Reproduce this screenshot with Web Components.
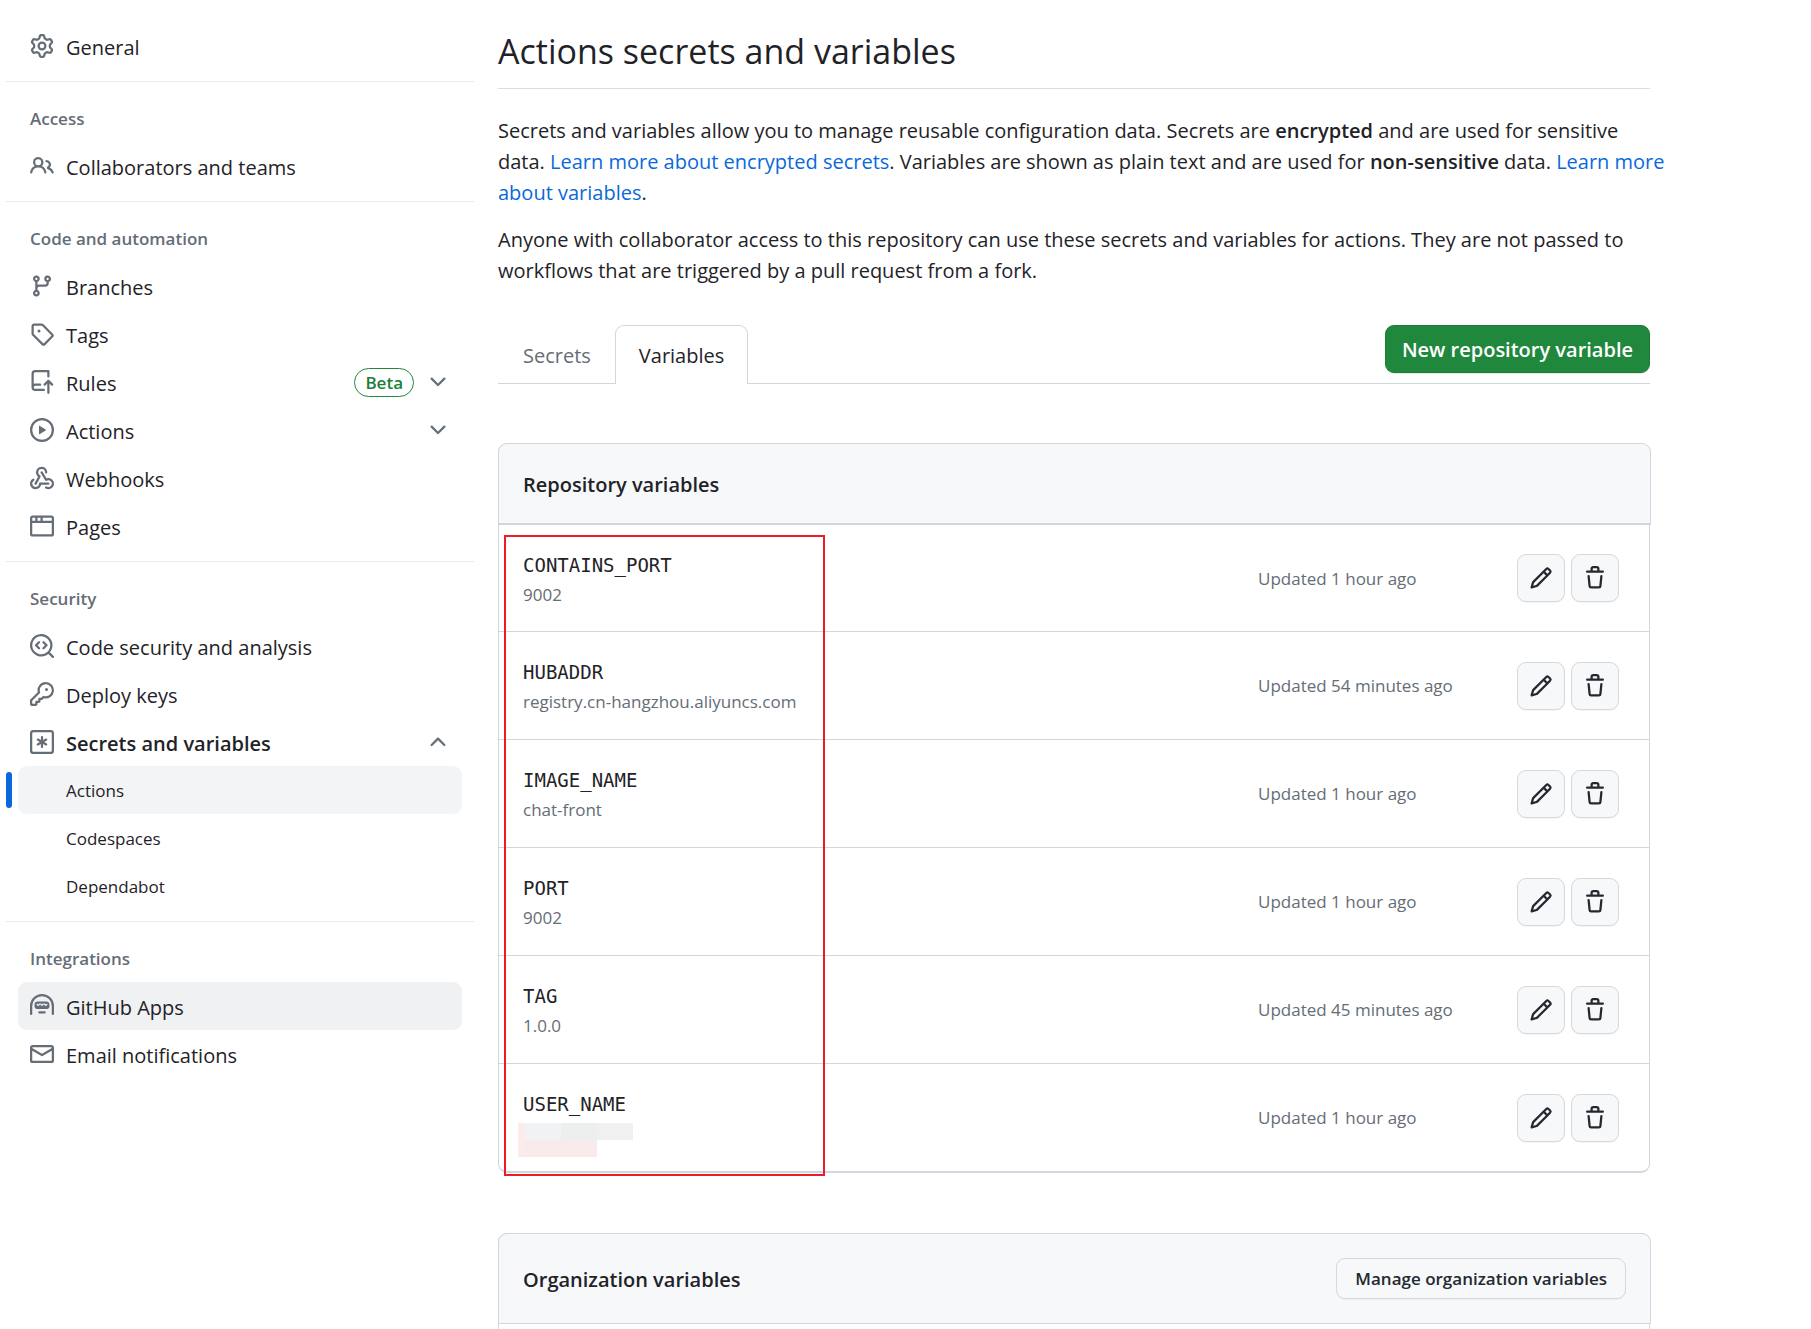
<!DOCTYPE html>
<html lang="en">
<head>
<meta charset="utf-8">
<title>Actions secrets and variables</title>
<style>
  :root {
    --fg: #1f2328;
    --muted: #656d76;
    --accent: #0969da;
    --line: #d0d7de;
    --subtle: #f6f8fa;
    --body: 20px;
    --small: 17px;
  }
  body {
    margin: 0;
    background: #fff;
    color: var(--fg);
    font-family: "Open Sans", "Noto Sans", sans-serif;
    font-size: var(--body);
    line-height: 31px;
  }
</style>
</head>
<body>
<settings-page>
  <settings-nav slot="nav">
    <nav-section>
      <nav-item icon="gear">General</nav-item>
    </nav-section>
    <nav-section heading="Access">
      <nav-item icon="people">Collaborators and teams</nav-item>
    </nav-section>
    <nav-section heading="Code and automation">
      <nav-item icon="branch">Branches</nav-item>
      <nav-item icon="tag">Tags</nav-item>
      <nav-item icon="push" expand="down" badge="Beta">Rules</nav-item>
      <nav-item icon="play" expand="down">Actions</nav-item>
      <nav-item icon="webhook">Webhooks</nav-item>
      <nav-item icon="browser">Pages</nav-item>
    </nav-section>
    <nav-section heading="Security">
      <nav-item icon="codescan">Code security and analysis</nav-item>
      <nav-item icon="key">Deploy keys</nav-item>
      <nav-item icon="asterisk" expand="up">Secrets and variables</nav-item>
      <nav-item sub current>Actions</nav-item>
      <nav-item sub>Codespaces</nav-item>
      <nav-item sub>Dependabot</nav-item>
    </nav-section>
    <nav-section heading="Integrations">
      <nav-item icon="hubot" active>GitHub Apps</nav-item>
      <nav-item icon="mail">Email notifications</nav-item>
    </nav-section>
  </settings-nav>

  <page-intro>
    <span slot="title">Actions secrets and variables</span>
  </page-intro>
  <tab-bar></tab-bar>
  <variable-box heading="Repository variables">
    <variable-table></variable-table>
    <highlight-frame slot="overlay"></highlight-frame>
  </variable-box>
  <variable-box heading="Organization variables" open-ended>
    <action-button slot="action">Manage organization variables</action-button>
  </variable-box>
</settings-page>

<script>
const ICONS = {
  gear: 'M8 0a8.2 8.2 0 0 1 .701.031C9.444.095 9.99.645 10.16 1.29l.288 1.107c.018.066.079.158.212.224.231.114.454.243.668.386.123.082.233.09.299.071l1.103-.303c.644-.176 1.392.021 1.82.63.27.385.506.792.704 1.218.315.675.111 1.422-.364 1.891l-.814.806c-.049.048-.098.147-.088.294.016.257.016.515 0 .772-.01.147.038.246.088.294l.814.806c.475.469.679 1.216.364 1.891a7.977 7.977 0 0 1-.704 1.217c-.428.61-1.176.807-1.82.63l-1.102-.302c-.067-.019-.177-.011-.3.071a5.909 5.909 0 0 1-.668.386c-.133.066-.194.158-.211.224l-.29 1.106c-.168.646-.715 1.196-1.458 1.26a8.006 8.006 0 0 1-1.402 0c-.743-.064-1.289-.614-1.458-1.26l-.289-1.106c-.018-.066-.079-.158-.212-.224a5.738 5.738 0 0 1-.668-.386c-.123-.082-.233-.09-.299-.071l-1.103.303c-.644.176-1.392-.021-1.82-.63a8.12 8.12 0 0 1-.704-1.218c-.315-.675-.111-1.422.363-1.891l.815-.806c.05-.048.098-.147.088-.294a6.214 6.214 0 0 1 0-.772c.01-.147-.038-.246-.088-.294l-.815-.806C.635 6.045.431 5.298.746 4.623a7.92 7.92 0 0 1 .704-1.217c.428-.61 1.176-.807 1.82-.63l1.102.302c.067.019.177.011.3-.071.214-.143.437-.272.668-.386.133-.066.194-.158.211-.224l.29-1.106C6.009.645 6.556.095 7.299.03 7.53.01 7.764 0 8 0Zm-.571 1.525c-.036.003-.108.036-.137.146l-.289 1.105c-.147.561-.549.967-.998 1.189-.173.086-.34.183-.5.29-.417.278-.97.423-1.529.27l-1.103-.303c-.109-.03-.175.016-.195.045-.22.312-.412.644-.573.99-.014.031-.021.11.059.19l.815.806c.411.406.562.957.53 1.456a4.709 4.709 0 0 0 0 .582c.032.499-.119 1.05-.53 1.456l-.815.806c-.081.08-.073.159-.059.19.162.346.353.677.573.989.02.03.085.076.195.046l1.102-.303c.56-.153 1.113-.008 1.53.27.161.107.328.204.501.29.447.222.85.629.997 1.189l.289 1.105c.029.109.101.143.137.146a6.6 6.6 0 0 0 1.142 0c.036-.003.108-.036.137-.146l.289-1.105c.147-.561.549-.967.998-1.189.173-.086.34-.183.5-.29.417-.278.97-.423 1.529-.27l1.103.303c.109.029.175-.016.195-.045.22-.313.411-.644.573-.99.014-.031.021-.11-.059-.19l-.815-.806c-.411-.406-.562-.957-.53-1.456a4.709 4.709 0 0 0 0-.582c-.032-.499.119-1.05.53-1.456l.815-.806c.081-.08.073-.159.059-.19a6.464 6.464 0 0 0-.573-.989c-.02-.03-.085-.076-.195-.046l-1.102.303c-.56.153-1.113.008-1.53-.27a4.44 4.44 0 0 0-.501-.29c-.447-.222-.85-.629-.997-1.189l-.289-1.105c-.029-.11-.101-.143-.137-.146a6.6 6.6 0 0 0-1.142 0ZM11 8a3 3 0 1 1-6 0 3 3 0 0 1 6 0ZM9.5 8a1.5 1.5 0 1 0-3.001.001A1.5 1.5 0 0 0 9.5 8Z',
  people: 'M2 5.5a3.5 3.5 0 1 1 5.898 2.549 5.508 5.508 0 0 1 3.034 4.084.75.75 0 1 1-1.482.235 4 4 0 0 0-7.9 0 .75.75 0 0 1-1.482-.236A5.507 5.507 0 0 1 3.102 8.05 3.493 3.493 0 0 1 2 5.5ZM11 4a3.001 3.001 0 0 1 2.22 5.018 5.01 5.01 0 0 1 2.56 3.012.749.749 0 0 1-.885.954.752.752 0 0 1-.549-.514 3.507 3.507 0 0 0-2.522-2.372.75.75 0 0 1-.574-.73v-.352a.75.75 0 0 1 .416-.672A1.5 1.5 0 0 0 11 5.5.75.75 0 0 1 11 4Zm-5.5-.5a2 2 0 1 0-.001 3.999A2 2 0 0 0 5.5 3.5Z',
  branch: 'M9.5 3.25a2.25 2.25 0 1 1 3 2.122V6A2.5 2.5 0 0 1 10 8.5H6a1 1 0 0 0-1 1v1.128a2.251 2.251 0 1 1-1.5 0V5.372a2.25 2.25 0 1 1 1.5 0v1.836A2.493 2.493 0 0 1 6 7h4a1 1 0 0 0 1-1v-.628A2.25 2.25 0 0 1 9.5 3.25Zm-6 0a.75.75 0 1 0 1.5 0 .75.75 0 0 0-1.5 0Zm8.25-.75a.75.75 0 1 0 0 1.5.75.75 0 0 0 0-1.5ZM4.25 12a.75.75 0 1 0 0 1.5.75.75 0 0 0 0-1.5Z',
  tag: 'M1 7.775V2.75C1 1.784 1.784 1 2.75 1h5.025c.464 0 .91.184 1.238.513l6.25 6.25a1.75 1.75 0 0 1 0 2.474l-5.026 5.026a1.75 1.75 0 0 1-2.474 0l-6.25-6.25A1.752 1.752 0 0 1 1 7.775Zm1.5 0c0 .066.026.13.073.177l6.25 6.25a.25.25 0 0 0 .354 0l5.025-5.025a.25.25 0 0 0 0-.354l-6.25-6.25a.25.25 0 0 0-.177-.073H2.75a.25.25 0 0 0-.25.25ZM6 5a1 1 0 1 1 0 2 1 1 0 0 1 0-2Z',
  push: 'M1 2.5A2.5 2.5 0 0 1 3.5 0h8.75a.75.75 0 0 1 .75.75v3.5a.75.75 0 0 1-1.5 0V1.5h-8a1 1 0 0 0-1 1v6.708A2.493 2.493 0 0 1 3.5 9h3.25a.75.75 0 0 1 0 1.5H3.5a1 1 0 0 0 0 2h5.75a.75.75 0 0 1 0 1.5H3.5A2.5 2.5 0 0 1 1 11.5Zm13.23 7.79-.001-.001-1.224-1.224v6.184a.75.75 0 0 1-1.5 0V9.066L10.28 10.29a.75.75 0 0 1-1.06-1.061l2.505-2.504a.75.75 0 0 1 1.06 0L15.29 9.23a.751.751 0 0 1-.018 1.042.751.751 0 0 1-1.042.018Z',
  play: 'M8 0a8 8 0 1 1 0 16A8 8 0 0 1 8 0ZM1.5 8a6.5 6.5 0 1 0 13 0 6.5 6.5 0 0 0-13 0Zm4.879-2.773 4.264 2.559a.25.25 0 0 1 0 .428l-4.264 2.559A.25.25 0 0 1 6 10.559V5.442a.25.25 0 0 1 .379-.215Z',
  webhook: 'M5.5 4.25a2.25 2.25 0 0 1 4.5 0 .75.75 0 0 0 1.5 0 3.75 3.75 0 1 0-6.14 2.889l-2.272 4.258a.75.75 0 0 0 1.324.706L7 7.25a.75.75 0 0 0-.309-1.015A2.25 2.25 0 0 1 5.5 4.25ZM7.364 3.607a.75.75 0 0 1 1.03.257l2.608 4.349a3.75 3.75 0 1 1-.628 6.785.75.75 0 0 1 .752-1.299 2.25 2.25 0 1 0-.033-3.88.75.75 0 0 1-1.03-.256L7.107 4.636a.75.75 0 0 1 .257-1.03ZM2.9 8.776A.75.75 0 0 1 2.625 9.8 2.25 2.25 0 1 0 6 11.75a.75.75 0 0 1 .75-.751h5.5a.75.75 0 0 1 0 1.5H7.425a3.751 3.751 0 1 1-5.55-3.998.75.75 0 0 1 1.024.274Z',
  browser: 'M0 2.75C0 1.784.784 1 1.75 1h12.5c.966 0 1.75.784 1.75 1.75v10.5A1.75 1.75 0 0 1 14.25 15H1.75A1.75 1.75 0 0 1 0 13.25ZM14.5 6h-13v7.25c0 .138.112.25.25.25h12.5a.25.25 0 0 0 .25-.25Zm-6-3.5v2h6V2.75a.25.25 0 0 0-.25-.25ZM5 2.5v2h2v-2Zm-3.25 0a.25.25 0 0 0-.25.25V4.5h2v-2Z',
  codescan: 'M8.47 4.97a.75.75 0 0 0 0 1.06L9.94 7.5 8.47 8.97a.75.75 0 1 0 1.06 1.06l2-2a.75.75 0 0 0 0-1.06l-2-2a.75.75 0 0 0-1.06 0ZM6.53 6.03a.75.75 0 0 0-1.06-1.06l-2 2a.75.75 0 0 0 0 1.06l2 2a.75.75 0 1 0 1.06-1.06L5.06 7.5l1.47-1.47ZM12.246 13.307a7.501 7.501 0 1 1 1.06-1.06l2.474 2.473a.749.749 0 0 1-.326 1.275.749.749 0 0 1-.734-.215ZM1.5 7.5a6.002 6.002 0 0 0 3.608 5.504 6.002 6.002 0 0 0 6.486-1.117.748.748 0 0 1 .292-.293A6 6 0 1 0 1.5 7.5Z',
  key: 'M10.5 0a5.499 5.499 0 1 1-1.288 10.848l-.932.932a.749.749 0 0 1-.53.22H7v.75a.749.749 0 0 1-.22.53l-.5.5a.749.749 0 0 1-.53.22H5v.75a.749.749 0 0 1-.22.53l-.5.5a.749.749 0 0 1-.53.22h-2A1.75 1.75 0 0 1 0 14.25v-2c0-.199.079-.389.22-.53l4.932-4.932A5.5 5.5 0 0 1 10.5 0Zm-4 5.5c-.001.431.069.86.205 1.269a.75.75 0 0 1-.181.768L1.5 12.56v1.69c0 .138.112.25.25.25h1.69l.06-.06v-1.19a.75.75 0 0 1 .75-.75h1.19l.06-.06v-1.19a.75.75 0 0 1 .75-.75h1.19l1.023-1.025a.75.75 0 0 1 .768-.18A4 4 0 1 0 6.5 5.5ZM11 6a1 1 0 1 1 0-2 1 1 0 0 1 0 2Z',
  asterisk: 'M0 2.25A2.25 2.25 0 0 1 2.25 0h11.5A2.25 2.25 0 0 1 16 2.25v11.5A2.25 2.25 0 0 1 13.75 16H2.25A2.25 2.25 0 0 1 0 13.75ZM2.25 1.5a.75.75 0 0 0-.75.75v11.5c0 .414.336.75.75.75h11.5a.75.75 0 0 0 .75-.75V2.25a.75.75 0 0 0-.75-.75ZM8 4a.75.75 0 0 1 .75.75V6.7l1.69-.975a.75.75 0 0 1 .75 1.3L9.5 8l1.69.976a.75.75 0 0 1-.75 1.298L8.75 9.3v1.951a.75.75 0 0 1-1.5 0V9.299l-1.69.976a.75.75 0 0 1-.75-1.3L6.5 8l-1.69-.975a.75.75 0 0 1 .75-1.3l1.69.976V4.75A.75.75 0 0 1 8 4Z',
  hubot: 'M0 8a8 8 0 1 1 16 0v5.25a.75.75 0 0 1-1.5 0V8a6.5 6.5 0 1 0-13 0v5.25a.75.75 0 0 1-1.5 0V8ZM5.5 12.25a.75.75 0 0 1 .75-.75h3.5a.75.75 0 0 1 0 1.5h-3.5a.75.75 0 0 1-.75-.75ZM3 7.25A2.25 2.25 0 0 1 5.25 5h5.5A2.25 2.25 0 0 1 13 7.25v.5A2.25 2.25 0 0 1 10.75 10h-5.5A2.25 2.25 0 0 1 3 7.75ZM4.6 6.5a.9.9 0 0 0-.3.65L5.5 8.1 6.75 7 8 8.1 9.25 7l1.25 1.1 1.2-.95a.9.9 0 0 0-.3-.65h-.5l-.4.5-.6-.6h-1.3l-.6.6-.6-.6H6.1l-.6.6-.4-.5Z',
  mail: 'M1.75 2h12.5c.966 0 1.75.784 1.75 1.75v8.5A1.75 1.75 0 0 1 14.25 14H1.75A1.75 1.75 0 0 1 0 12.25v-8.5C0 2.784.784 2 1.75 2ZM1.5 12.251c0 .138.112.25.25.25h12.5a.25.25 0 0 0 .25-.25V5.809L8.38 9.397a.75.75 0 0 1-.76 0L1.5 5.809v6.442Zm13-8.181v-.32a.25.25 0 0 0-.25-.25H1.75a.25.25 0 0 0-.25.25v.32L8 7.88Z',
  down: 'M12.78 5.22a.749.749 0 0 1 0 1.06l-4.25 4.25a.749.749 0 0 1-1.06 0L3.22 6.28a.749.749 0 1 1 1.06-1.06L8 8.939l3.72-3.719a.749.749 0 0 1 1.06 0Z',
  up: 'M3.22 10.53a.749.749 0 0 1 0-1.06l4.25-4.25a.749.749 0 0 1 1.06 0l4.25 4.25a.749.749 0 1 1-1.06 1.06L8 6.811 4.28 10.53a.749.749 0 0 1-1.06 0Z',
  pencil: 'M11.013 1.427a1.75 1.75 0 0 1 2.474 0l1.086 1.086a1.75 1.75 0 0 1 0 2.474l-8.61 8.61c-.21.21-.47.364-.756.445l-3.251.93a.75.75 0 0 1-.927-.928l.929-3.25c.081-.286.235-.547.445-.758l8.61-8.61Zm.176 4.823L9.75 4.81l-6.286 6.287a.253.253 0 0 0-.064.108l-.558 1.953 1.953-.558a.253.253 0 0 0 .108-.064Zm1.238-3.763a.25.25 0 0 0-.354 0L10.811 3.75l1.439 1.44 1.263-1.263a.25.25 0 0 0 0-.354Z',
  trash: 'M11 1.75V3h2.25a.75.75 0 0 1 0 1.5H2.75a.75.75 0 0 1 0-1.5H5V1.75C5 .784 5.784 0 6.75 0h2.5C10.216 0 11 .784 11 1.75ZM4.496 6.675l.66 6.6a.25.25 0 0 0 .249.225h5.19a.25.25 0 0 0 .249-.225l.66-6.6a.75.75 0 0 1 1.492.149l-.66 6.6A1.748 1.748 0 0 1 10.595 15h-5.19a1.75 1.75 0 0 1-1.741-1.575l-.66-6.6a.75.75 0 1 1 1.492-.15ZM6.5 1.75V3h3V1.75a.25.25 0 0 0-.25-.25h-2.5a.25.25 0 0 0-.25.25Z'
};

class BaseElement extends HTMLElement {
  connectedCallback() {
    if (this.shadowRoot) return;
    this.attachShadow({ mode: 'open' }).innerHTML =
      '<style>*{box-sizing:border-box}' + this.css() + '</style>' + this.html();
  }
}

/* A 16-unit glyph drawn at 24px in the current colour. */
customElements.define('svg-icon', class extends BaseElement {
  css() { return ':host{display:block;flex:none;width:24px;height:24px} svg{display:block;width:100%;height:100%;fill:currentColor}'; }
  html() { return `<svg viewBox="0 0 16 16" aria-hidden="true"><path d="${ICONS[this.getAttribute('name')]}"/></svg>`; }
});

customElements.define('settings-page', class extends BaseElement {
  css() { return `
    :host{display:grid;grid-template-columns:468px minmax(0,1fr);gap:24px;min-height:100vh;padding:0 161px 0 6px;box-sizing:border-box}
    main{display:flex;flex-direction:column;min-width:0;padding-top:24px}`; }
  html() { return '<slot name="nav"></slot><main><slot></slot></main>'; }
});

customElements.define('settings-nav', class extends BaseElement {
  css() { return ':host{display:block;padding-top:22px} nav{display:block}'; }
  html() { return '<nav aria-label="Settings"><slot></slot></nav>'; }
});

customElements.define('nav-section', class extends BaseElement {
  css() { return `
    :host{display:block;padding-bottom:11px}
    :host([heading]){border-top:1px solid #e8ebee}
    h3{margin:0;padding:23px 24px 10px;font-size:var(--small);line-height:27px;font-weight:600;color:var(--muted)}`; }
  html() {
    const h = this.getAttribute('heading');
    return (h ? `<h3>${h}</h3>` : '') + '<slot></slot>';
  }
});

customElements.define('nav-item', class extends BaseElement {
  css() { return `
    :host{display:block;position:relative;padding:0 12px}
    .row{display:flex;align-items:center;gap:12px;width:100%;height:48px;padding:0 12px;border:0;border-radius:9px;
      background:none;color:var(--fg);font:inherit;text-align:left;text-decoration:none}
    svg-icon{color:var(--muted)}
    .label{flex:1;padding-top:4px;line-height:30px}
    .badge{height:29px;padding:0 10px;border:1px solid #1f883d;border-radius:15px;color:#1a7f37;
      font-size:var(--small);line-height:27px;font-weight:600}
    :host([expand=up]) .label{font-weight:600}
    :host([sub]) .row{padding-left:48px;font-size:var(--small)}
    :host([sub]) .label{padding-top:2px}
    :host([current]) .row{background:#f3f4f6}
    :host([active]) .row{background:#eff1f3}
    :host([current])::before{content:"";position:absolute;left:0;top:6px;width:6px;height:36px;border-radius:3px;background:var(--accent)}`; }
  html() {
    const icon = this.getAttribute('icon'), expand = this.getAttribute('expand'), badge = this.getAttribute('badge');
    const inner = (icon ? `<svg-icon name="${icon}"></svg-icon>` : '') + '<span class="label"><slot></slot></span>' +
      (badge ? `<span class="badge">${badge}</span>` : '') + (expand ? `<svg-icon name="${expand}"></svg-icon>` : '');
    return expand
      ? `<button class="row" type="button" aria-expanded="${expand === 'up'}">${inner}</button>`
      : `<a class="row" href="#"${this.hasAttribute('current') ? ' aria-current="page"' : ''}>${inner}</a>`;
  }
});

customElements.define('page-intro', class extends BaseElement {
  css() { return `
    :host{display:block}
    h2{margin:0 0 26px;padding-bottom:10px;border-bottom:1px solid #d8dee4;font-size:34px;line-height:54px;font-weight:400}
    p{margin:0 -16px 16px 0}
    a{color:var(--accent);text-decoration:none}
    b{font-weight:600}`; }
  html() { return `
    <h2><slot name="title"></slot></h2>
    <p>Secrets and variables allow you to manage reusable configuration data. Secrets are <b>encrypted</b> and are used for sensitive data. <a href="#">Learn more about encrypted secrets</a>. Variables are shown as plain text and are used for <b>non-sensitive</b> data. <a href="#">Learn more about variables</a>.</p>
    <p>Anyone with collaborator access to this repository can use these secrets and variables for actions. They are not passed to workflows that are triggered by a pull request from a fork.</p>`; }
});

customElements.define('tab-bar', class extends BaseElement {
  css() { return `
    :host{display:flex;justify-content:space-between;align-items:flex-start;margin:23px 0 59px;border-bottom:1px solid var(--line)}
    nav{display:flex;margin-bottom:-1px}
    a{height:59px;padding:0 23px;border:1px solid transparent;border-bottom:0;line-height:60px;color:var(--muted);text-decoration:none}
    a:first-child{padding-left:24px}
    a[aria-current]{border-color:var(--line);border-radius:9px 9px 0 0;background:#fff;color:var(--fg)}`; }
  html() { return `
    <nav aria-label="Kind"><a href="#">Secrets</a><a href="#" aria-current="page">Variables</a></nav>
    <action-button primary>New repository variable</action-button>`; }
});

customElements.define('action-button', class extends BaseElement {
  css() { return `
    :host{display:block}
    button{display:block;height:41px;padding:0 18px;border:1px solid #d5d8dc;border-radius:9px;background:var(--subtle);
      color:#24292f;box-shadow:0 1px 0 rgba(31,35,40,.04);font:600 var(--small)/39px "Open Sans","Noto Sans",sans-serif;white-space:nowrap}
    :host([primary]) button{height:48px;padding:0 16px;border-color:#1e7c39;background:#1f883d;color:#fff;font-size:var(--body);line-height:48px;box-shadow:0 1px 0 rgba(31,35,40,.1)}
    :host([icon]) button{display:grid;place-items:center;width:48px;height:48px;padding:0}`; }
  html() {
    const icon = this.getAttribute('icon');
    return icon
      ? `<button type="button" aria-label="${this.getAttribute('label')}"><svg-icon name="${icon}"></svg-icon></button>`
      : '<button type="button"><slot></slot></button>';
  }
});

customElements.define('variable-box', class extends BaseElement {
  css() { return `
    :host{display:block;position:relative;margin-bottom:60px;border:1px solid var(--line);border-bottom-width:2px;border-radius:9px;box-sizing:border-box}
    :host([open-ended]){flex:1;margin-bottom:0;border-bottom:0;border-radius:9px 9px 0 0}
    header{display:flex;justify-content:space-between;align-items:center;min-height:82px;margin:-1px -2px 0 -1px;padding:0 24px;
      border:1px solid var(--line);border-bottom-width:2px;border-radius:9px 9px 0 0;background:var(--subtle)}
    :host([open-ended]) header{min-height:91px;border-bottom-width:1px}
    h3{margin:0;padding-top:2px;font-size:var(--body);line-height:31px;font-weight:600}`; }
  html() { return `<header><h3>${this.getAttribute('heading')}</h3><slot name="action"></slot></header><slot></slot><slot name="overlay"></slot>`; }
});

const VARIABLES = [
  ['CONTAINS_PORT', '9002', 'Updated 1 hour ago'],
  ['HUBADDR', 'registry.cn-hangzhou.aliyuncs.com', 'Updated 54 minutes ago'],
  ['IMAGE_NAME', 'chat-front', 'Updated 1 hour ago'],
  ['PORT', '9002', 'Updated 1 hour ago'],
  ['TAG', '1.0.0', 'Updated 45 minutes ago'],
  ['USER_NAME', null, 'Updated 1 hour ago']
];

customElements.define('variable-table', class extends BaseElement {
  css() { return `
    :host{display:block}
    table{width:100%;border-collapse:separate;border-spacing:0;table-layout:fixed}
    .when{width:259px}
    .tools{width:132px}
    td,th{height:108px;padding:0;border-top:1px solid var(--line);color:var(--muted);font-size:var(--small);font-weight:400;text-align:left;vertical-align:middle}
    tr:first-child>*{height:106px;border-top:0}
    th{padding:3px 0 0 24px}
    .name{display:block;color:var(--fg);font:19px/30px "DejaVu Sans Mono",monospace}
    .value{display:block;height:30px;line-height:30px}
    .group{display:flex;gap:6px}
    mask-patch{padding-top:4px;margin-left:-5px}`; }
  html() {
    return '<table aria-label="Repository variables"><colgroup><col><col class="when"><col class="tools"></colgroup><tbody>' +
      VARIABLES.map(([name, value, when]) => `<tr>
        <th scope="row"><span class="name">${name}</span><span class="value">${value || '<mask-patch></mask-patch>'}</span></th>
        <td>${when}</td>
        <td><div class="group"><action-button icon="pencil" label="Edit ${name}"></action-button><action-button icon="trash" label="Delete ${name}"></action-button></div></td>
      </tr>`).join('') + '</tbody></table>';
  }
});

/* Blocks that hide a private value. */
customElements.define('mask-patch', class extends BaseElement {
  css() { return ':host{display:block} svg{display:block}'; }
  html() { return `<svg width="115" height="34" shape-rendering="crispEdges" role="img" aria-label="Hidden value">
    <path fill="#fbebeb" d="M0 0h7v34H0z"/><path fill="#f9ebeb" d="M7 17h72v17H7z"/>
    <path fill="#f0f2f4" d="M7 0h36v17H7z"/><path fill="#edefee" d="M43 0h36v17H43z"/><path fill="#f0f0f0" d="M79 0h36v17H79z"/></svg>`; }
});

/* Red frame laid over the name column. */
customElements.define('highlight-frame', class extends BaseElement {
  css() { return ':host{display:block;position:absolute;left:5px;top:91px;bottom:-5px;width:321px;border:2px solid #ed1c24;box-sizing:border-box;pointer-events:none}'; }
  html() { return ''; }
});
</script>
</body>
</html>
